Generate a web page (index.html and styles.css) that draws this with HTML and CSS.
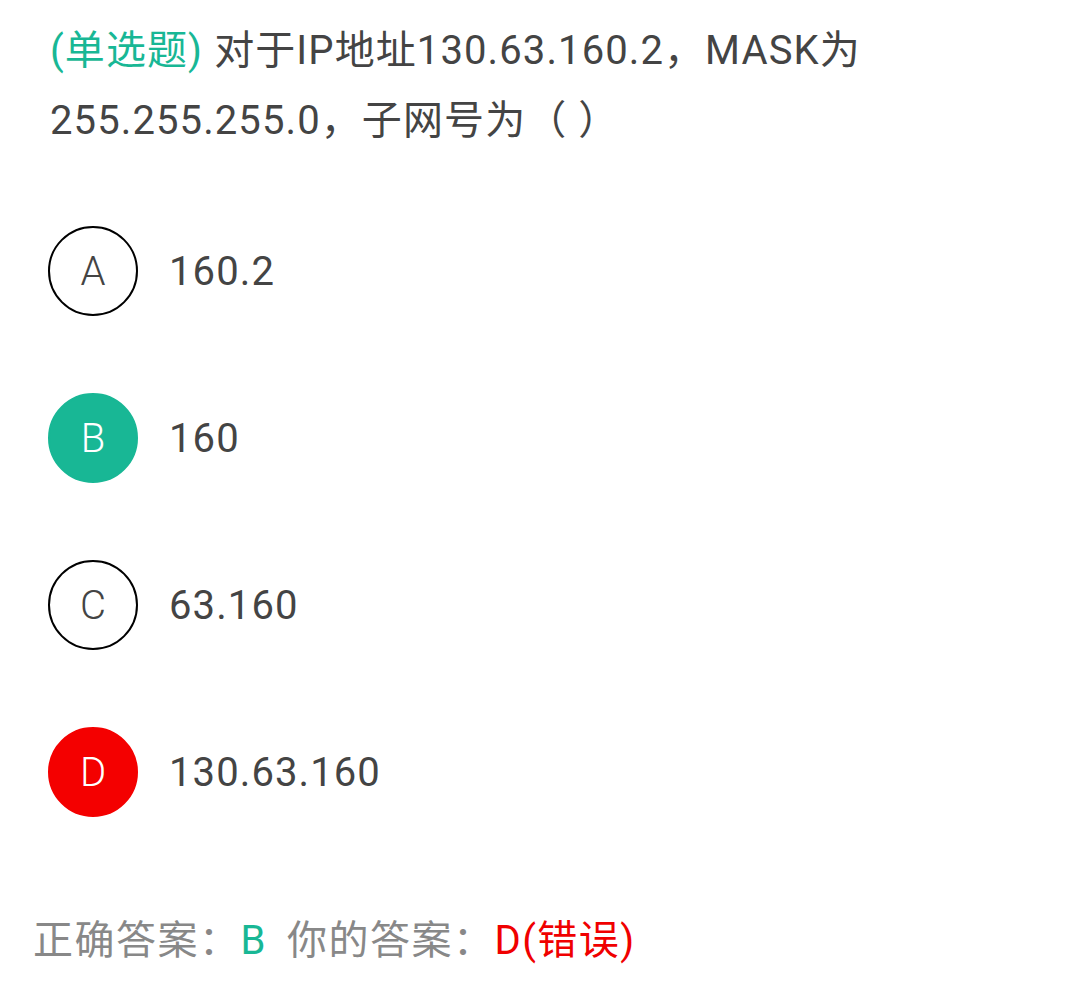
FILE: index.html
```html
<!DOCTYPE html>
<html lang="zh">
<head>
<meta charset="utf-8">
<link rel="stylesheet" href="styles.css">
</head>
<body>
<div class="page">
  <p class="question"><span class="qtype">(单选题)</span> 对于IP地址130.63.160.2，MASK为255.255.255.0，子网号为（ ）</p>
  <ul class="options">
    <li class="option"><span class="badge">A</span><span class="opt-text">160.2</span></li>
    <li class="option"><span class="badge badge-correct">B</span><span class="opt-text">160</span></li>
    <li class="option"><span class="badge">C</span><span class="opt-text">63.160</span></li>
    <li class="option"><span class="badge badge-wrong">D</span><span class="opt-text">130.63.160</span></li>
  </ul>
  <p class="result">正确答案：<span class="right">B</span><span class="sep"></span>你的答案：<span class="wrong">D(错误)</span></p>
</div>
</body>
</html>
```

FILE: styles.css
```css
html, body {
  margin: 0;
  padding: 0;
  background: #ffffff;
}
body {
  font-family: Roboto, "Noto Sans CJK SC", sans-serif;
  color: #444444;
}
.page {
  width: 1080px;
  height: 1003px;
  box-sizing: border-box;
  padding-top: 16px;
}
.question {
  margin: 0;
  padding: 0 200px 0 50px;
  font-size: 40px;
  line-height: 70px;
  letter-spacing: 1.1px;
}
.qtype {
  color: #18b795;
}
.options {
  list-style: none;
  margin: 70px 0 0 0;
  padding: 0 0 0 48px;
  display: flex;
  flex-direction: column;
  gap: 77px;
}
.option {
  display: flex;
  align-items: center;
  gap: 31px;
}
.badge {
  width: 90px;
  height: 90px;
  box-sizing: border-box;
  border: 2.5px solid #000;
  border-radius: 50%;
  display: flex;
  align-items: center;
  justify-content: center;
  font-size: 40px;
  font-weight: 300;
  color: #444;
  flex-shrink: 0;
}
.badge-correct {
  border-color: #18b795;
  background: #18b795;
  color: #fff;
}
.badge-wrong {
  border-color: #f40000;
  background: #f40000;
  color: #fff;
}
.opt-text {
  font-size: 40px;
  letter-spacing: 1.1px;
}
.result {
  margin: 94px 0 0 0;
  padding-left: 33px;
  font-size: 40px;
  line-height: 60px;
  letter-spacing: 1.5px;
  color: #888888;
}
.sep {
  display: inline-block;
  width: 20px;
}
.right {
  color: #18b795;
}
.wrong {
  color: #f00000;
}
```
